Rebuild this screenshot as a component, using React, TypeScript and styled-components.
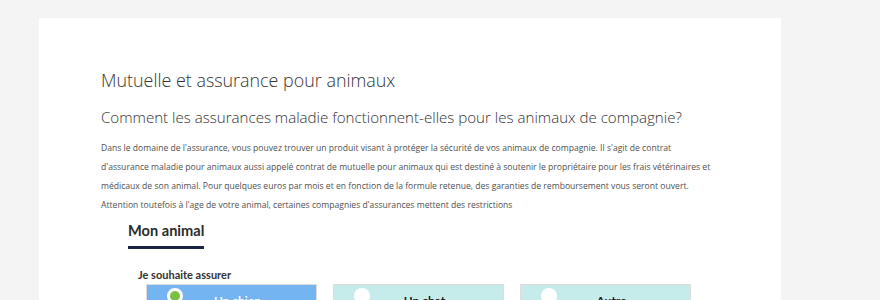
import React, { useState } from 'react';
import styled, { createGlobalStyle } from 'styled-components';

const GlobalStyle = createGlobalStyle`
  body {
    margin: 0;
    background: #f4f4f4;
    font-family: "Open Sans", "Noto Sans", sans-serif;
  }
`;

const Page = styled.div`
  padding: 18px 0 0 39px;
`;

const Card = styled.main`
  width: 742px;
  min-height: 300px;
  box-sizing: border-box;
  background: #ffffff;
  padding: 49px 62px 0 62px;
`;

const Title = styled.h1`
  margin: 0;
  font-size: 17.9px;
  font-weight: 300;
  line-height: 26px;
  color: #333333;
`;

const Subtitle = styled.h2`
  margin: 12px 0 0;
  font-size: 15.1px;
  font-weight: 300;
  line-height: 24px;
  color: #333333;
  white-space: nowrap;
`;

const Intro = styled.p`
  margin: 10px 0 0;
  font-size: 8.6px;
  line-height: 19px;
  color: #505050;
`;

const FormSection = styled.section`
  padding-left: 27px;
  margin-top: 5px;
  font-family: Lato, "Open Sans", sans-serif;
`;

const SectionTitle = styled.h3`
  display: inline-block;
  margin: 0;
  padding-bottom: 4px;
  font-size: 14.6px;
  font-weight: 700;
  line-height: 22px;
  color: #2b2b2b;
  border-bottom: 3px solid #1b2344;
`;

const Field = styled.div`
  padding-left: 10px;
  margin-top: 19px;
`;

const FieldLabel = styled.div`
  font-size: 11px;
  font-weight: 700;
  line-height: 14px;
  color: #333333;
`;

const Options = styled.div`
  display: grid;
  grid-template-columns: repeat(3, 171px);
  gap: 16px;
  margin: 2px 0 0 8px;
`;

const Option = styled.button<{ $active: boolean }>`
  display: flex;
  align-items: flex-start;
  height: 40px;
  padding: 3px 24px 0 20px;
  border: 1px solid #dcdcdc;
  background: ${p => (p.$active ? '#74b4f1' : '#c5ebea')};
  font-family: Lato, "Open Sans", sans-serif;
  cursor: pointer;
`;

const Radio = styled.span<{ $active: boolean }>`
  flex: none;
  width: 16px;
  height: 16px;
  box-sizing: border-box;
  border-radius: 50%;
  background: ${p => (p.$active ? '#7ac143' : '#ffffff')};
  border: ${p => (p.$active ? '3px solid #ffffff' : 'none')};
`;

const OptionText = styled.span<{ $active: boolean }>`
  flex: 1;
  text-align: center;
  font-size: 12px;
  font-weight: 700;
  line-height: 16px;
  padding-top: 5px;
  color: ${p => (p.$active ? '#ffffff' : '#222222')};
`;

const animals = ['Un chien', 'Un chat', 'Autre'];

export default function App() {
  const [selected, setSelected] = useState('Un chien');

  return (
    <Page>
      <GlobalStyle />
      <Card>
        <Title>Mutuelle et assurance pour animaux</Title>
        <Subtitle>Comment les assurances maladie fonctionnent-elles pour les animaux de compagnie?</Subtitle>
        <Intro>
          Dans le domaine de l'assurance, vous pouvez trouver un produit visant à protéger la sécurité de vos
          animaux de compagnie. Il s'agit de contrat d'assurance maladie pour animaux aussi appelé contrat de
          mutuelle pour animaux qui est destiné à soutenir le propriétaire pour les frais vétérinaires et
          médicaux de son animal. Pour quelques euros par mois et en fonction de la formule retenue, des
          garanties de remboursement vous seront ouvert. Attention toutefois à l'age de votre animal, certaines
          compagnies d'assurances mettent des restrictions
        </Intro>
        <FormSection>
          <SectionTitle>Mon animal</SectionTitle>
          <Field>
            <FieldLabel>Je souhaite assurer</FieldLabel>
            <Options>
              {animals.map(a => (
                <Option key={a} $active={selected === a} onClick={() => setSelected(a)}>
                  <Radio $active={selected === a} />
                  <OptionText $active={selected === a}>{a}</OptionText>
                </Option>
              ))}
            </Options>
          </Field>
        </FormSection>
      </Card>
    </Page>
  );
}
